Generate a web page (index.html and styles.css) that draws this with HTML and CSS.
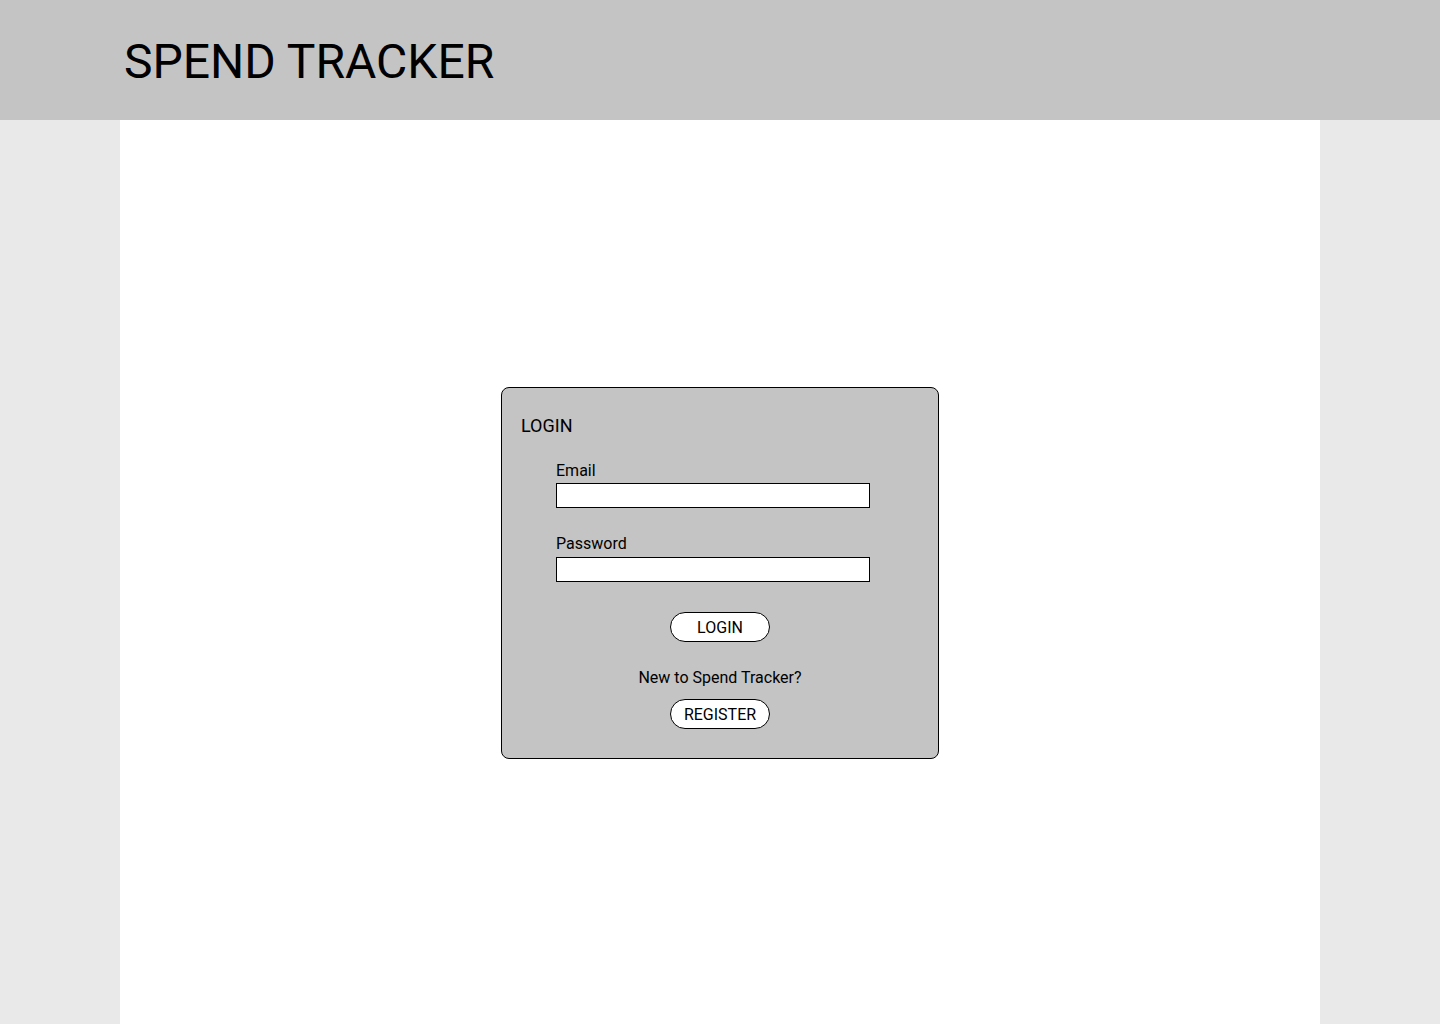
FILE: index.html
```html
<!DOCTYPE html>
<html lang="en">
<head>
<meta charset="utf-8">
<title>Spend Tracker</title>
<link rel="stylesheet" href="styles.css">
</head>
<body>
<header class="topbar">
  <h1 class="brand">SPEND TRACKER</h1>
</header>
<main class="page">
  <section class="card">
    <h2 class="card-title">LOGIN</h2>
    <form class="form">
      <label class="field-label" for="email">Email</label>
      <input class="field-input" id="email" type="email">
      <label class="field-label field-label-gap" for="password">Password</label>
      <input class="field-input" id="password" type="password">
    </form>
    <div class="actions">
      <button class="pill" type="button">LOGIN</button>
      <p class="hint">New to Spend Tracker?</p>
      <button class="pill pill-register" type="button">REGISTER</button>
    </div>
  </section>
</main>
</body>
</html>
```
FILE: styles.css
```css
* { box-sizing: border-box; }
html, body { margin: 0; padding: 0; }
body {
  font-family: Roboto, "Liberation Sans", Arial, sans-serif;
  background: #e9e9e9;
  color: #000;
  min-height: 1024px;
  display: flex;
  flex-direction: column;
}
.topbar {
  height: 120px;
  background: #c4c4c4;
  display: flex;
  align-items: center;
  padding: 4px 0 0 124px;
  flex: none;
}
.brand {
  margin: 0;
  font-size: 48px;
  font-weight: 400;
  line-height: 56px;
}
.page {
  width: 1200px;
  margin: 0 auto;
  background: #fff;
  flex: 1;
  display: flex;
  align-items: center;
  justify-content: center;
  padding-top: 2px;
}
.card {
  width: 438px;
  height: 372px;
  background: #c4c4c4;
  border: 1px solid #000;
  border-radius: 8px;
  padding: 27px 0 28px 0;
  display: flex;
  flex-direction: column;
}
.card-title {
  margin: 0 0 0 19px;
  font-size: 18px;
  font-weight: 400;
  line-height: 21px;
}
.form {
  display: flex;
  flex-direction: column;
  margin: 25px 0 0 54px;
  width: 314px;
}
.field-label {
  font-size: 16px;
  line-height: 19px;
  margin-bottom: 3px;
}
.field-label-gap {
  margin-top: 26px;
  margin-bottom: 4px;
}
.field-input {
  width: 314px;
  height: 25px;
  border: 1px solid #000;
  border-radius: 0;
  background: #fff;
  margin: 0;
  padding: 0 4px;
  font-family: inherit;
  font-size: 14px;
}
.actions {
  display: flex;
  flex-direction: column;
  align-items: center;
  margin-top: 30px;
}
.pill {
  width: 100px;
  height: 30px;
  border: 1px solid #000;
  border-radius: 15px;
  background: #fff;
  font-family: inherit;
  font-size: 16px;
  line-height: 18px;
  color: #000;
  padding: 2px 0 0 0;
  margin: 0;
}
.hint {
  margin: 26px 0 0 0;
  font-size: 16px;
  line-height: 19px;
}
.pill-register { margin-top: 12px; }
```
